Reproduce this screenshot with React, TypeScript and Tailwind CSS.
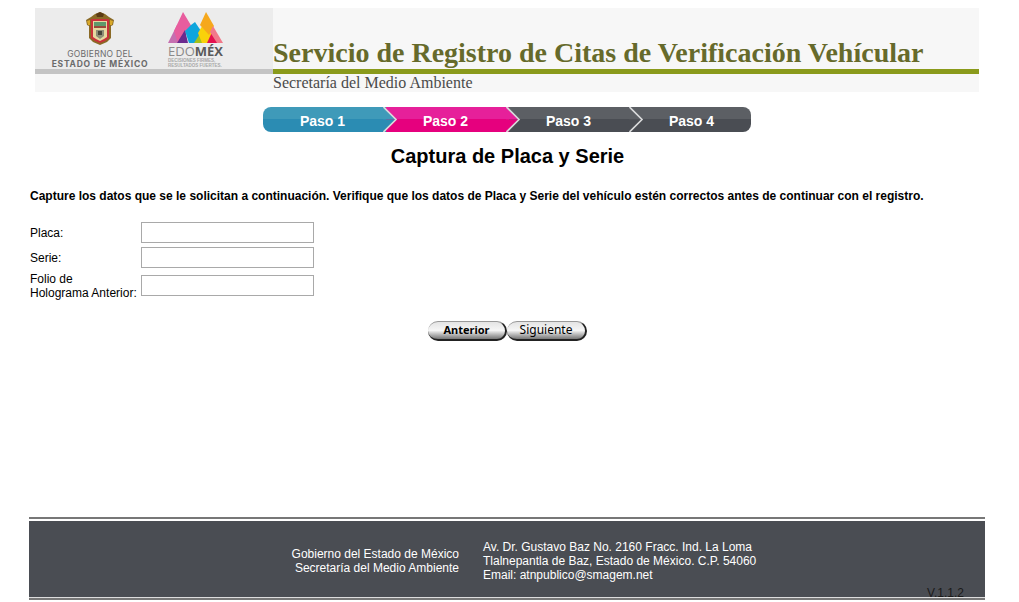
const sans = '[font-family:"Liberation_Sans",Arial,sans-serif]';

function Escudo() {
  return (
    <svg width="30" height="34" viewBox="0 0 30 34" className="block">
      <path d="M6 5 L10 2 L15 0 L20 2 L24 5 L29 8 L28 13 L26 14 L26 26 L22 30 L15 33 L8 30 L4 26 L4 14 L2 13 L1 8 Z" fill="#8a6a26" />
      <path d="M6 7 L24 7 L24 26 L20 29 L15 31 L10 29 L6 26 Z" fill="#c8323a" />
      <path d="M8 9 L22 9 L22 25 L19 27 L15 29 L11 27 L8 25 Z" fill="#e6d9a0" />
      <rect x="9" y="10" width="12" height="6" fill="#5f9a6c" />
      <rect x="9" y="14" width="12" height="2" fill="#9a4a3a" />
      <path d="M11 18 L19 18 L19 24 L15 27 L11 24 Z" fill="#8f8f78" />
      <rect x="13" y="19" width="4" height="4" fill="#45453a" />
      <path d="M11 2 L15 0 L19 2 L18 5 L12 5 Z" fill="#5a3a14" />
      <path d="M2 9 L5 8 L5 13 L3 13 Z M28 9 L25 8 L25 13 L27 13 Z" fill="#d9a92a" />
    </svg>
  );
}

function EdomexMark() {
  return (
    <svg width="55" height="32" viewBox="0 0 55 32" className="block">
      <polygon points="0,31 9,13 15,31" fill="#c56fb0" />
      <polygon points="15,0 24,15 18,21 10,31 6,19" fill="#e85d9e" />
      <polygon points="9,31 17,18 20,31" fill="#6a2a8e" />
      <polygon points="23,13 27,10 35,22 28,31 21,31 17,19" fill="#0fa5dc" />
      <polygon points="26,31 33,20 38,31" fill="#a3c21a" />
      <polygon points="30,21 36,11 44,22 40,31 34,31" fill="#f9d20a" />
      <polygon points="38,0 46,14 41,23 32,13" fill="#f6a81c" />
      <polygon points="39,31 45,18 50,31" fill="#e3124f" />
      <polygon points="45,14 55,31 49,31 42,20" fill="#f2788a" />
    </svg>
  );
}

function Paso({ label, top, bot, last, first }: { label: string; top: string; bot: string; last?: boolean; first?: boolean }) {
  return (
    <div
      className={`relative h-[25px] flex items-center justify-center pt-[3px] ${last ? 'w-[119px] rounded-r-[8px]' : 'w-[123px] pr-[4px]'} ${first ? 'rounded-l-[8px]' : ''}`}
      style={{ background: `linear-gradient(${top} 50%, ${bot} 50%)` }}
    >
      <span className="relative z-20 text-white font-bold text-[14px] leading-none">{label}</span>
      {!last && (
        <svg width="16" height="25" viewBox="0 0 16 25" className="absolute right-[-13px] top-0 z-10">
          <path d="M0 0 L13 12.5 L0 12.5 Z" fill={top} />
          <path d="M0 12.5 L13 12.5 L0 25 Z" fill={bot} />
          <path d="M0.5 0 L13 12.5 L0.5 25" fill="none" stroke="#d9dadb" strokeWidth="1.6" />
        </svg>
      )}
    </div>
  );
}

function Boton({ label, bold }: { label: string; bold?: boolean }) {
  return (
    <button
      className={`h-[20px] rounded-full border-r-2 border-b-2 border-t border-[#222] border-t-[#999] bg-gradient-to-b from-[#e4e4e4] via-[#f6f6f6] to-[#777] text-black leading-none [font-family:"Noto_Sans",sans-serif] ${bold ? 'w-[79px] font-bold text-[11px] pb-[3px]' : 'w-[80px] text-[12px] pb-[1px]'}`}
    >
      {label}
    </button>
  );
}

function Campo({ label, tall }: { label: React.ReactNode; tall?: boolean }) {
  return (
    <div className="flex items-center">
      <label className={`w-[111px] text-[12px] leading-[14px] text-black ${tall ? 'h-[27px]' : ''}`}>{label}</label>
      <input type="text" className="w-[173px] h-[21px] border border-[#a9a9a9] bg-white" />
    </div>
  );
}

export default function App() {
  return (
    <div className={`w-[1019px] h-[602px] bg-white overflow-hidden ${sans}`}>
      <header className="ml-[35px] w-[944px] pt-[8px]">
        <div className="flex h-[84px] bg-[#f7f7f7]">
          <div className="w-[238px] flex flex-col">
            <div className="h-[61px] bg-[#ececec] flex">
              <div className="w-[130px] flex flex-col items-center pt-[4px] text-[#6b6b6b]">
                <Escudo />
                <span className="mt-[3px] h-[10px] text-[8.5px] leading-[10px] tracking-[0.25px] [font-family:'Inter',sans-serif]">GOBIERNO DEL</span>
                <span className="h-[10px] text-[8.5px] leading-[10px] font-bold tracking-[0.75px] [font-family:'Inter',sans-serif]">ESTADO DE MÉXICO</span>
              </div>
              <div className="ml-[3px] pt-[4px] flex flex-col">
                <EdomexMark />
                <span className="text-[13px] leading-[12px] mt-[1px] text-[#8a8a8a] [font-family:'Open_Sans',sans-serif]">EDO<b className="text-[#5a5a5a]">MÉX</b></span>
                <span className="text-[4.5px] leading-[5px] mt-[1px] font-bold text-[#a8a8a8] whitespace-nowrap">DECISIONES FIRMES,<br />RESULTADOS FUERTES.</span>
              </div>
            </div>
            <div className="h-[5px] bg-[#c4c4c4]" />
          </div>
          <div className="flex-1 flex flex-col [font-family:'Liberation_Serif',serif]">
            <div className="h-[61px] flex items-end pb-[1px]">
              <h1 className="text-[28px] leading-[30px] font-bold text-[#666a2b] whitespace-nowrap">Servicio de Registro de Citas de Verificación Vehícular</h1>
            </div>
            <div className="h-[5px] bg-[#8a9a1b]" />
            <p className="text-[16px] leading-[17px] text-[#4a4a4a]">Secretaría del Medio Ambiente</p>
          </div>
        </div>
      </header>

      <nav className="mt-[15px] ml-[263px] w-[488px] flex rounded-[8px]">
        <Paso label="Paso 1" first top="#3f9ab9" bot="#2b8cb3" />
        <Paso label="Paso 2" top="#e6209a" bot="#e6007e" />
        <Paso label="Paso 3" top="#5c5f64" bot="#4a4d53" />
        <Paso label="Paso 4" last top="#5c5f64" bot="#4a4d53" />
      </nav>

      <h2 className="mt-[13px] text-center ml-[-4px] text-[20px] leading-[22px] font-bold text-black">Captura de Placa y Serie</h2>

      <p className="mt-[22px] ml-[30px] text-[12px] leading-[14px] font-bold text-black">
        Capture los datos que se le solicitan a continuación. Verifique que los datos de Placa y Serie del vehículo estén correctos antes de continuar con el registro.
      </p>

      <form className="mt-[19px] ml-[30px] flex flex-col gap-[4px]">
        <Campo label="Placa:" />
        <Campo label="Serie:" />
        <Campo tall label={<>Folio de<br />Holograma Anterior:</>} />
      </form>

      <div className="mt-[22px] flex justify-center ml-[-4px]">
        <Boton label="Anterior" bold />
        <Boton label="Siguiente" />
      </div>

      <footer className="mt-[176px] ml-[29px] w-[956px]">
        <div className="h-[2px] bg-[#777]" />
        <div className="mt-[2px] h-[76px] bg-[#4a4d53] relative flex text-white text-[12px] leading-[14px]">
          <div className="w-[430px] pt-[26px] text-right">
            Gobierno del Estado de México<br />Secretaría del Medio Ambiente
          </div>
          <div className="ml-[24px] pt-[19px]">
            Av. Dr. Gustavo Baz No. 2160 Fracc. Ind. La Loma<br />
            Tlalnepantla de Baz, Estado de México. C.P. 54060<br />
            Email: atnpublico@smagem.net
          </div>
          <span className="absolute right-[21px] bottom-[-3px] text-[12px] leading-[14px] text-[#1a1a1a]">V.1.1.2</span>
        </div>
        <div className="h-[1px] bg-[#ddd]" />
        <div className="h-[2px] bg-[#777]" />
      </footer>
    </div>
  );
}
